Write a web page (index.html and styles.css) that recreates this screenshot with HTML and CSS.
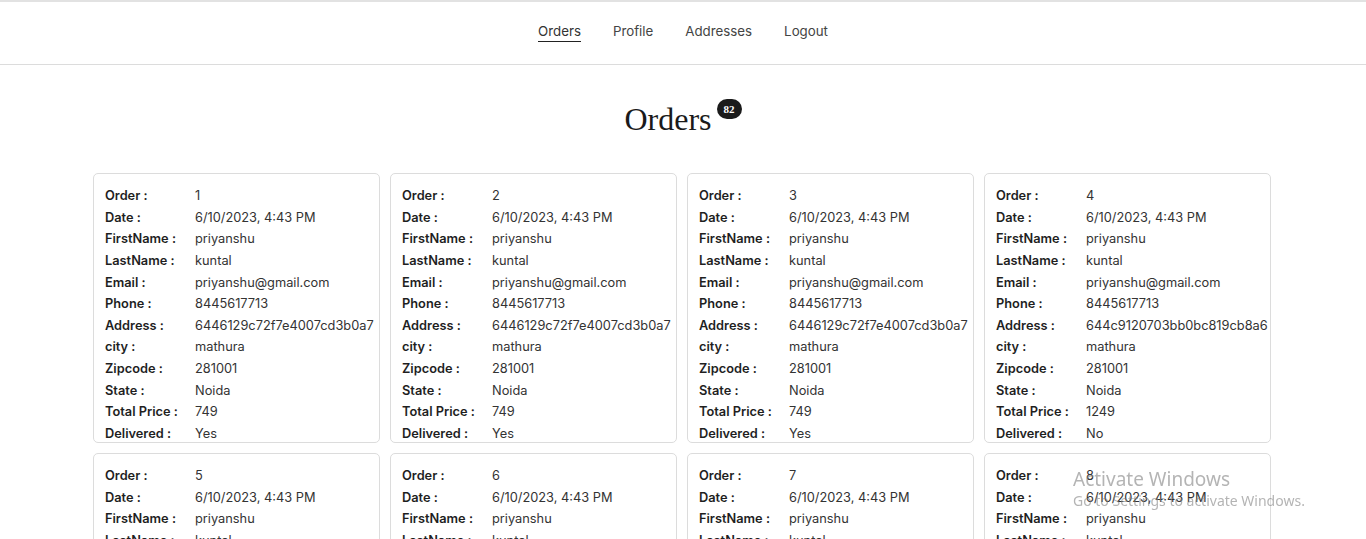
FILE: index.html
```html
<!DOCTYPE html>
<html>
<head>
<meta charset="utf-8">
<link rel="stylesheet" href="styles.css">
</head>
<body>
<nav class="nav">
  <a class="nav-link active">Orders</a>
  <a class="nav-link">Profile</a>
  <a class="nav-link">Addresses</a>
  <a class="nav-link">Logout</a>
</nav>
<main class="main">
  <h1 class="title"><span>Orders</span><span class="badge">82</span></h1>
  <div class="grid" id="grid"></div>
</main>
<div class="watermark">
  <div class="wm-title">Activate Windows</div>
  <div class="wm-sub">Go to Settings to activate Windows.</div>
</div>
<script>
const orders = [
  [1,"6446129c72f7e4007cd3b0a7","749","Yes"],
  [2,"6446129c72f7e4007cd3b0a7","749","Yes"],
  [3,"6446129c72f7e4007cd3b0a7","749","Yes"],
  [4,"644c9120703bb0bc819cb8a6","1249","No"],
  [5,"6446129c72f7e4007cd3b0a7","749","Yes"],
  [6,"6446129c72f7e4007cd3b0a7","749","Yes"],
  [7,"6446129c72f7e4007cd3b0a7","749","Yes"],
  [8,"644c9120703bb0bc819cb8a6","1249","No"]
];
const grid = document.getElementById('grid');
orders.forEach(o => {
  const rows = [
    ["Order :", o[0]],["Date :","6/10/2023, 4:43 PM"],["FirstName :","priyanshu"],
    ["LastName :","kuntal"],["Email :","priyanshu@gmail.com"],["Phone :","8445617713"],
    ["Address :",o[1]],["city :","mathura"],["Zipcode :","281001"],["State :","Noida"],
    ["Total Price :",o[2]],["Delivered :",o[3]]
  ];
  const card = document.createElement('div');
  card.className = 'card';
  rows.forEach(r => {
    const row = document.createElement('div');
    row.className = 'row';
    row.innerHTML = '<span class="label">'+r[0]+'</span><span class="value">'+r[1]+'</span>';
    card.appendChild(row);
  });
  grid.appendChild(card);
});
</script>
</body>
</html>
```
FILE: styles.css
```css
* { box-sizing: border-box; }
html, body { margin: 0; padding: 0; background: #fff; }
body {
  font-family: Inter, "Noto Sans", sans-serif;
  color: #212529;
  border-top: 2px solid #e2e2e2;
}
.nav {
  height: 63px;
  display: flex;
  justify-content: center;
  align-items: center;
  gap: 32px;
  border-bottom: 1px solid #dcdcdc;
  padding-bottom: 2px;
}
.nav-link {
  font-size: 13.3px;
  color: #444;
  text-decoration: none;
  padding-bottom: 2px;
  border-bottom: 1px solid transparent;
}
.nav-link.active {
  border-bottom-color: #222;
  color: #333;
}
.main {
  padding-top: 34px;
}
.title {
  margin: 0 0 34px;
  display: flex;
  justify-content: center;
  align-items: flex-start;
  gap: 5px;
  font-family: "Liberation Serif", "DejaVu Serif", serif;
  font-weight: 400;
  font-size: 32px;
  line-height: 40px;
  color: #1a1a1a;
}
.badge {
  background: #1b1b1b;
  color: #fff;
  font-size: 11px;
  font-weight: 700;
  line-height: 20px;
  height: 20px;
  padding: 0 7px;
  border-radius: 10px;
  font-family: "Liberation Serif", serif;
}
.grid {
  width: 1178px;
  margin: 0 auto;
  display: grid;
  grid-template-columns: repeat(4, 1fr);
  gap: 10px;
  position: relative;
  left: -1px;
}
.card {
  border: 1px solid #dcdcdc;
  border-radius: 5px;
  height: 270px;
  padding: 11px 11px 0;
  overflow: hidden;
}
.row {
  display: flex;
  height: 21.6px;
  align-items: center;
  font-size: 12.8px;
}
.label {
  width: 90px;
  flex: none;
  font-weight: 600;
  color: #1f1f1f;
}
.value {
  color: #333;
  white-space: nowrap;
}
.watermark {
  position: fixed;
  left: 1073px;
  top: 467px;
  color: rgba(130,130,130,0.6);
  font-family: "Noto Sans", "Open Sans", sans-serif;
  pointer-events: none;
}
.wm-title { font-size: 19px; line-height: 24px; }
.wm-sub { font-size: 14px; line-height: 20px; }
```
